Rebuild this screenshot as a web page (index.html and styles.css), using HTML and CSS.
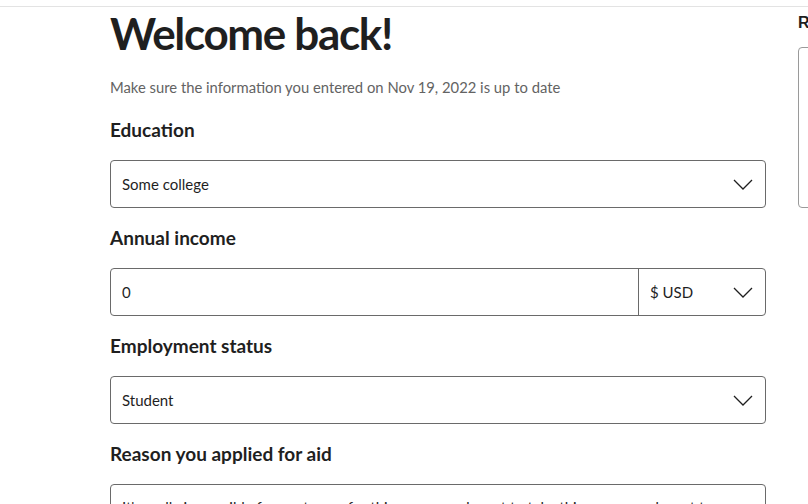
FILE: index.html
```html
<!DOCTYPE html>
<html lang="en">
<head>
<meta charset="utf-8">
<title>Welcome back</title>
<link rel="stylesheet" href="styles.css">
</head>
<body>
<div class="topbar"></div>
<div class="page">
  <main class="main">
    <h1 class="title">Welcome back!</h1>
    <p class="subtitle">Make sure the information you entered on Nov 19, 2022 is up to date</p>

    <div class="field">
      <div class="label">Education</div>
      <div class="control select">
        <span class="value">Some college</span>
        <svg class="chev" width="20" height="11" viewBox="0 0 20 11"><path d="M1 1 L10 10 L19 1" fill="none" stroke="#1f1f1f" stroke-width="1.3"/></svg>
      </div>
    </div>

    <div class="field">
      <div class="label">Annual income</div>
      <div class="control split">
        <span class="value amount">0</span>
        <div class="currency">
          <span class="value">$ USD</span>
          <svg class="chev" width="20" height="11" viewBox="0 0 20 11"><path d="M1 1 L10 10 L19 1" fill="none" stroke="#1f1f1f" stroke-width="1.3"/></svg>
        </div>
      </div>
    </div>

    <div class="field">
      <div class="label">Employment status</div>
      <div class="control select">
        <span class="value">Student</span>
        <svg class="chev" width="20" height="11" viewBox="0 0 20 11"><path d="M1 1 L10 10 L19 1" fill="none" stroke="#1f1f1f" stroke-width="1.3"/></svg>
      </div>
    </div>

    <div class="field">
      <div class="label">Reason you applied for aid</div>
      <div class="control textarea">
        <span class="value">It's really impossible for me to pay for this course and want to take this course and want to</span>
      </div>
    </div>
  </main>
  <aside class="side">
    <div class="side-title">Review</div>
    <div class="side-box"></div>
  </aside>
</div>
</body>
</html>
```

FILE: styles.css
```css
html, body {
  margin: 0;
  padding: 0;
  background: #ffffff;
  overflow: hidden;
}
body {
  font-family: "Lato", "Source Sans Pro", sans-serif;
  color: #1f1f1f;
  width: 808px;
  height: 504px;
}
.topbar {
  height: 6px;
  border-bottom: 1px solid #e3e3e3;
}
.page {
  display: flex;
  gap: 32px;
  padding-left: 110px;
  width: 1200px;
}
.main {
  width: 656px;
  flex: none;
}
.title {
  margin: 2px 0 0;
  font-size: 44px;
  line-height: 48px;
  font-weight: 700;
  letter-spacing: -1.35px;
}
.subtitle {
  margin: 20px 0 0;
  font-size: 14.8px;
  line-height: 20px;
  color: #636363;
}
.field {
  margin-top: 21px;
}
.field + .field {
  margin-top: 18px;
}
.label {
  font-size: 19px;
  line-height: 24px;
  font-weight: 700;
  margin-bottom: 18px;
}
.control {
  box-sizing: border-box;
  height: 48px;
  border: 1px solid #6a6a6a;
  border-radius: 4px;
  display: flex;
  align-items: center;
}
.value {
  font-size: 15px;
}
.select {
  padding: 0 12px 0 11px;
  justify-content: space-between;
}
.chev {
  display: block;
}
.split .amount {
  flex: 1;
  padding-left: 11px;
}
.currency {
  width: 127px;
  height: 100%;
  border-left: 1px solid #6a6a6a;
  display: flex;
  align-items: center;
  justify-content: space-between;
  padding: 0 12px 0 11px;
  box-sizing: border-box;
}
.textarea {
  align-items: flex-start;
  padding: 13px 11px;
  height: 96px;
}
.side {
  width: 300px;
  flex: none;
}
.side-title {
  font-family: "Liberation Sans", Arial, sans-serif;
  font-weight: 700;
  font-size: 16px;
  line-height: 20px;
  margin-top: 6px;
}
.side-box {
  margin-top: 14px;
  height: 161px;
  border: 1px solid #9a9a9a;
  border-radius: 4px;
  box-sizing: border-box;
}
```
